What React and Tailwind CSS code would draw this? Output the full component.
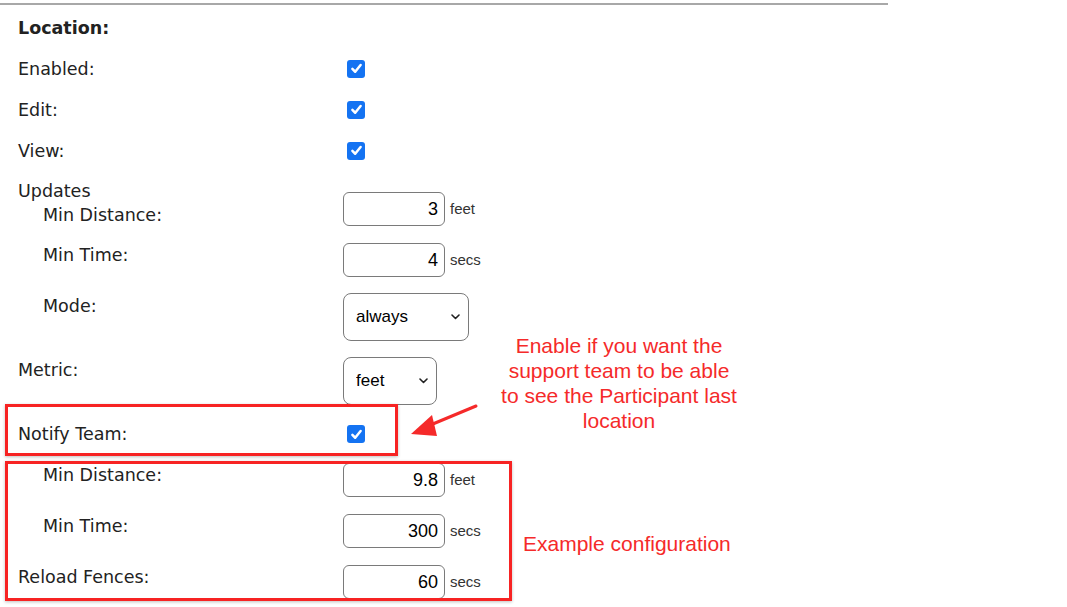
import React from 'react';

const labelFont = { fontFamily: '"DejaVu Sans", Verdana, sans-serif' };

function Check() {
  return (
    <span className="ml-[4px] inline-flex h-[18px] w-[18px] items-center justify-center rounded-[3px] bg-[#1473f2]">
      <svg width="13" height="13" viewBox="0 0 12 12">
        <path d="M2.2 6.4 L4.8 9 L9.8 2.8" fill="none" stroke="white" strokeWidth="2.3" strokeLinecap="round" strokeLinejoin="round" />
      </svg>
    </span>
  );
}

function NumInput({ value, unit }) {
  return (
    <div className="flex items-center gap-[5px]">
      <input
        readOnly
        value={value}
        className="h-[34px] w-[102px] rounded-[6px] border border-[#7a7a7a] bg-white pr-[6px] text-right text-[18px] text-black outline-none font-['Liberation_Sans',Arial,sans-serif]"
      />
      <span className="text-[15px] text-[#333] font-['Liberation_Sans',Arial,sans-serif]">{unit}</span>
    </div>
  );
}

function Select({ value, width }) {
  return (
    <div className={`relative ${width}`}>
      <select
        defaultValue={value}
        className="h-[48px] w-full appearance-none rounded-[8px] border border-[#7a7a7a] bg-white pl-[12px] text-[17px] text-black outline-none font-['Liberation_Sans',Arial,sans-serif]"
      >
        <option value={value}>{value}</option>
      </select>
      <svg className="pointer-events-none absolute right-[9px] top-[21px]" width="9" height="6" viewBox="0 0 9 6">
        <path d="M1 1 L4.5 4.5 L8 1" fill="none" stroke="#222" strokeWidth="1.6" strokeLinecap="round" strokeLinejoin="round" />
      </svg>
    </div>
  );
}

function CheckRow({ label, top, h = 'h-[41px]' }) {
  return (
    <div className={`flex items-center ${h} ${top}`}>
      <div className="w-[325px] leading-[24px]">{label}</div>
      <Check />
    </div>
  );
}

function InputRow({ label, indent, value, unit, mt }) {
  return (
    <div className={`flex items-start ${mt}`}>
      <div className={`w-[325px] leading-[24px] ${indent ? 'pl-[25px]' : ''}`}>{label}</div>
      <NumInput value={value} unit={unit} />
    </div>
  );
}

export default function App() {
  return (
    <div className="relative h-[607px] w-[1067px] overflow-hidden bg-white text-[17.5px] text-[#222]" style={labelFont}>
      <div className="pt-[3px]">
        <div className="h-[2px] w-[888px] bg-[#a8a8a8]" />
      </div>

      <div className="pl-[18px]">
        <div className="mt-[11px] font-bold leading-[24px]">Location:</div>

        <CheckRow label="Enabled:" top="mt-[8px]" />
        <CheckRow label="Edit:" />
        <CheckRow label="View:" />

        {/* Updates */}
        <div className="mt-[8px] flex items-start">
          <div className="w-[325px] leading-[24px]">
            <div>Updates</div>
            <div className="pl-[25px]">Min Distance:</div>
          </div>
          <div className="mt-[13px]">
            <NumInput value="3" unit="feet" />
          </div>
        </div>

        <InputRow label="Min Time:" indent value="4" unit="secs" mt="mt-[16px]" />

        <div className="mt-[16px] flex items-start">
          <div className="mt-[1px] w-[325px] pl-[25px] leading-[24px]">Mode:</div>
          <Select value="always" width="w-[126px]" />
        </div>

        <div className="mt-[16px] flex items-start">
          <div className="mt-[1px] w-[325px] leading-[24px]">Metric:</div>
          <Select value="feet" width="w-[94px]" />
        </div>

        <CheckRow label="Notify Team:" top="mt-[8px]" h="h-[42px]" />

        <InputRow label="Min Distance:" indent value="9.8" unit="feet" mt="mt-[8px]" />
        <InputRow label="Min Time:" indent value="300" unit="secs" mt="mt-[17px]" />
        <InputRow label="Reload Fences:" value="60" unit="secs" mt="mt-[17px]" />
      </div>

      {/* annotation overlay */}
      <div className="pointer-events-none absolute left-[5px] top-[404px] h-[52px] w-[393px] border-[3px] border-[#f72323] shadow-[0_1px_3px_rgba(0,0,0,0.25)]" />
      <div className="pointer-events-none absolute left-[5px] top-[461px] h-[140px] w-[507px] border-[3px] border-[#f72323] shadow-[0_1px_3px_rgba(0,0,0,0.25)]" />

      <svg className="pointer-events-none absolute left-0 top-0" width="1067" height="607">
        <line x1="476" y1="406" x2="428" y2="426" stroke="#f52a2a" strokeWidth="3" strokeLinecap="round" />
        <polygon points="411,434 432,415 437,436" fill="#f52a2a" />
      </svg>

      <div className="absolute left-[469px] top-[333px] w-[300px] text-center text-[21px] leading-[25px] text-[#f52a2a] font-['Liberation_Sans',Arial,sans-serif]">
        Enable if you want the<br />
        support team to be able<br />
        to see the Participant last<br />
        location
      </div>
      <div className="absolute left-[523px] top-[531px] text-[21px] leading-[25px] text-[#f52a2a] font-['Liberation_Sans',Arial,sans-serif]">
        Example configuration
      </div>
    </div>
  );
}
